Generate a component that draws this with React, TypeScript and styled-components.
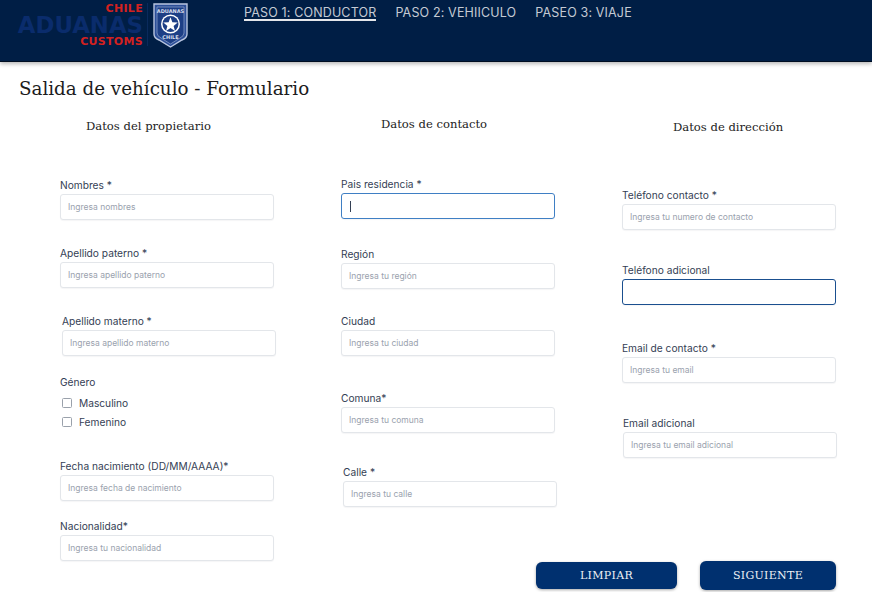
import React from "react";
import styled, {createGlobalStyle} from "styled-components";

const GlobalStyle = createGlobalStyle`
  html, body {
    margin: 0;
    padding: 0;
    background: #ffffff;
    overflow: hidden;
  }
  * { box-sizing: border-box; }
`;

const Page = styled.div`
  width: 872px;
  height: 592px;
  font-family: Inter, "Liberation Sans", sans-serif;
`;

const Header = styled.header`
  display: flex;
  align-items: flex-start;
  height: 62px;
  padding-left: 18px;
  background: #001e45;
  border-bottom: 1px solid #000e22;
  box-shadow: 0 2px 4px rgba(0,0,0,0.28);
`;

const Logo = styled.div`
  display: flex;
  align-items: flex-start;
  width: 226px;
  padding-top: 3px;
`;

const LogoWords = styled.div`
  display: flex;
  flex-direction: column;
  align-items: flex-end;
  width: 125px;
  font-family: "DejaVu Sans", sans-serif;
  font-weight: bold;
`;

const LogoSmall = styled.span`
  height: 12px;
  line-height: 12px;
  font-size: 11px;
  letter-spacing: 0.3px;
  color: #d3211f;
`;

const LogoBig = styled.span`
  height: 20px;
  line-height: 20px;
  margin: 0 0 1px;
  font-size: 22.8px;
  color: #0a2c6c;
  white-space: nowrap;
`;

const LogoDivider = styled.div`
  width: 1px;
  height: 43px;
  margin: 0 5px 0 4px;
  background: #0a2a5c;
`;

const Nav = styled.nav`
  display: flex;
  gap: 19px;
  padding-top: 5px;
`;

const NavItem = styled.a<{$active?: boolean}>`
  height: 16px;
  line-height: 16px;
  font-size: 12.5px;
  letter-spacing: 0.15px;
  white-space: nowrap;
  color: #c4cad4;
  border-bottom: ${p => p.$active ? "2px solid #e4e6ea" : "none"};
`;

const Title = styled.h1`
  margin: 0;
  padding: 12px 0 0 19px;
  height: 48px;
  line-height: 30px;
  font-family: "DejaVu Serif", "Liberation Serif", serif;
  font-size: 18.3px;
  font-weight: normal;
  color: #1c1c1c;
`;

const FormGrid = styled.form`
  display: grid;
  grid-template-columns: 281px 281px 214px;
  grid-template-rows: auto auto;
  padding: 0 36px 0 60px;
`;

const Column = styled.section<{$tall?: boolean}>`
  display: flex;
  flex-direction: column;
  grid-row: ${p => p.$tall ? "1 / 3" : "1"};
`;

const ColumnTitle = styled.h2<{$left: number; $top: number}>`
  margin: ${p => p.$top}px 0 0 ${p => p.$left}px;
  height: 20px;
  line-height: 20px;
  font-family: "DejaVu Serif", "Liberation Serif", serif;
  font-size: 11.6px;
  font-weight: normal;
  white-space: nowrap;
  color: #222222;
`;

const Field = styled.div<{$top: number; $shift?: number}>`
  width: 214px;
  margin-top: ${p => p.$top}px;
  margin-left: ${p => p.$shift || 0}px;
`;

const Label = styled.label`
  display: block;
  height: 14px;
  margin-bottom: 2px;
  line-height: 14px;
  font-size: 10.2px;
  white-space: nowrap;
  color: #344054;
`;

const InputWrap = styled.div`
  position: relative;
`;

const Input = styled.input<{$focus?: "light" | "dark"}>`
  display: block;
  width: 100%;
  height: 26px;
  padding: 0 7px 1px;
  font-family: Inter, "Liberation Sans", sans-serif;
  font-size: 8.5px;
  color: #344054;
  background: #ffffff;
  outline: none;
  border-radius: 3px;
  border: 1px solid ${p => p.$focus === "light" ? "#3f7fc4" : p.$focus === "dark" ? "#1a4f8f" : "#e3e6ea"};
  box-shadow: 0 1px 1px rgba(16,24,40,0.04);
  &::placeholder {
    color: #9aa2ae;
    opacity: 1;
  }
`;

const Caret = styled.span`
  position: absolute;
  left: 9px;
  top: 8px;
  width: 1px;
  height: 11px;
  background: #344054;
`;

const CheckGroup = styled.div`
  display: flex;
  flex-direction: column;
  gap: 5px;
  margin-top: 7px;
`;

const CheckRow = styled.label`
  display: flex;
  align-items: center;
  gap: 7px;
  height: 14px;
  padding-left: 2px;
  font-size: 10.2px;
  color: #344054;
`;

const CheckBox = styled.span`
  width: 10px;
  height: 10px;
  border: 1px solid #9aa1ab;
  border-radius: 1.5px;
  background: #ffffff;
`;

const Actions = styled.div`
  grid-column: 2 / 4;
  grid-row: 2;
  display: flex;
  align-items: center;
  justify-content: flex-end;
  gap: 23px;
  margin-top: 54px;
`;

const ActionButton = styled.button<{$width: number; $height: number}>`
  width: ${p => p.$width}px;
  height: ${p => p.$height}px;
  padding: 0;
  border: none;
  border-radius: 6px;
  background: #00306f;
  color: #eef0f5;
  font-family: "DejaVu Serif", "Liberation Serif", serif;
  font-size: 11px;
  letter-spacing: 0.3px;
  box-shadow: 0 1px 3px rgba(0,0,0,0.35);
`;

type InputField = {
  label: string;
  placeholder?: string;
  top: number;
  shift?: number;
  focus?: "light" | "dark";
  caret?: boolean;
};

const Shield = () => (
  <svg width="35" height="45" viewBox="0 0 35 45">
    <path d="M1 1 H34 V31 Q34 35 29 37 L17.5 44 L6 37 Q1 35 1 31 Z" fill="#2c4f98" stroke="#b8c5df" strokeWidth="1.4"/>
    <path d="M4 4 H31 V30 Q31 33 27 35 L17.5 41 L8 35 Q4 33 4 30 Z" fill="#1d3f86" stroke="#93a7d0" strokeWidth="0.7"/>
    <text x="17.5" y="10" textAnchor="middle" fontSize="5" fontWeight="bold" fontFamily="DejaVu Sans, sans-serif" fill="#d7deec">ADUANAS</text>
    <circle cx="17.5" cy="21" r="9.5" fill="#ffffff"/>
    <circle cx="17.5" cy="21" r="8" fill="#1d3f86"/>
    <path d="M17.5 14.2 L19.4 19.2 L24.7 19.5 L20.6 22.9 L22 28 L17.5 25.1 L13 28 L14.4 22.9 L10.3 19.5 L15.6 19.2 Z" fill="#ffffff"/>
    <text x="17.5" y="36" textAnchor="middle" fontSize="5" fontWeight="bold" fontFamily="DejaVu Sans, sans-serif" fill="#d7deec">CHILE</text>
  </svg>
);

const TextField = ({label, placeholder, top, shift, focus, caret}: InputField) => (
  <Field $top={top} $shift={shift}>
    <Label>{label}</Label>
    <InputWrap>
      <Input placeholder={placeholder} $focus={focus} readOnly/>
      {caret && <Caret/>}
    </InputWrap>
  </Field>
);

const contactFields: InputField[] = [
  {label: "Pais residencia *", top: 43, focus: "light", caret: true},
  {label: "Región", placeholder: "Ingresa tu región", top: 28},
  {label: "Ciudad", placeholder: "Ingresa tu ciudad", top: 25},
  {label: "Comuna*", placeholder: "Ingresa tu comuna", top: 35},
  {label: "Calle *", placeholder: "Ingresa tu calle", top: 32, shift: 2},
];

const addressFields: InputField[] = [
  {label: "Teléfono contacto *", placeholder: "Ingresa tu numero de contacto", top: 51},
  {label: "Teléfono adicional", top: 33, focus: "dark"},
  {label: "Email de contacto *", placeholder: "Ingresa tu email", top: 36},
  {label: "Email adicional", placeholder: "Ingresa tu email adicional", top: 33, shift: 1},
];

const App = () => {
  return (
    <Page>
      <GlobalStyle/>
      <Header>
        <Logo>
          <LogoWords>
            <LogoSmall>CHILE</LogoSmall>
            <LogoBig>ADUANAS</LogoBig>
            <LogoSmall>CUSTOMS</LogoSmall>
          </LogoWords>
          <LogoDivider/>
          <Shield/>
        </Logo>
        <Nav>
          <NavItem $active>PASO 1: CONDUCTOR</NavItem>
          <NavItem>PASO 2: VEHIICULO</NavItem>
          <NavItem>PASEO 3: VIAJE</NavItem>
        </Nav>
      </Header>
      <Title>Salida de vehículo - Formulario</Title>
      <FormGrid>
        <Column $tall>
          <ColumnTitle $left={26} $top={6}>Datos del propietario</ColumnTitle>
          <TextField label="Nombres *" placeholder="Ingresa nombres" top={42}/>
          <TextField label="Apellido paterno *" placeholder="Ingresa apellido paterno" top={26}/>
          <TextField label="Apellido materno *" placeholder="Ingresa apellido materno" top={26} shift={2}/>
          <Field $top={19}>
            <Label as="div">Género</Label>
            <CheckGroup>
              <CheckRow><CheckBox/>Masculino</CheckRow>
              <CheckRow><CheckBox/>Femenino</CheckRow>
            </CheckGroup>
          </Field>
          <TextField label="Fecha nacimiento (DD/MM/AAAA)*" placeholder="Ingresa fecha de nacimiento" top={30}/>
          <TextField label="Nacionalidad*" placeholder="Ingresa tu nacionalidad" top={18}/>
        </Column>
        <Column>
          <ColumnTitle $left={40} $top={4}>Datos de contacto</ColumnTitle>
          {contactFields.map(f => <TextField key={f.label} {...f}/>)}
        </Column>
        <Column>
          <ColumnTitle $left={51} $top={7}>Datos de dirección</ColumnTitle>
          {addressFields.map(f => <TextField key={f.label} {...f}/>)}
        </Column>
        <Actions>
          <ActionButton type="button" $width={141} $height={27}>LIMPIAR</ActionButton>
          <ActionButton type="button" $width={136} $height={29}>SIGUIENTE</ActionButton>
        </Actions>
      </FormGrid>
    </Page>
  );
};

export default App;
